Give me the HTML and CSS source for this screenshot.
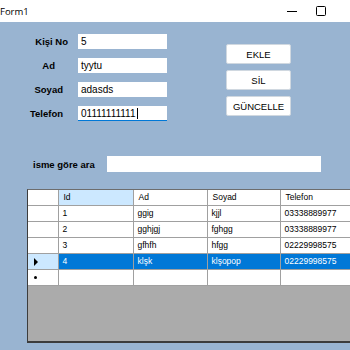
FILE: index.html
```html
<!DOCTYPE html>
<html lang="tr">
<head>
  <meta charset="UTF-8">
  <title>Form1</title>
  <link rel="stylesheet" href="styles.css">
</head>
<body>
  <div class="window">
    <div class="titlebar">
      <span class="title">Form1</span>
      <div class="controls">
        <svg width="10" height="10" viewBox="0 0 10 10"><line x1="0" y1="5.5" x2="10" y2="5.5" stroke="#000" stroke-width="1"/></svg>
        <svg width="10" height="10" viewBox="0 0 10 10"><rect x="0.5" y="0.5" width="9" height="9" rx="1" fill="none" stroke="#000" stroke-width="1"/></svg>
      </div>
    </div>

    <div class="form">
      <div class="top">
        <div class="fields">
          <div class="field"><span class="label">Kişi No</span><div class="textbox">5</div></div>
          <div class="field"><span class="label ad">Ad</span><div class="textbox">tyytu</div></div>
          <div class="field"><span class="label soyad">Soyad</span><div class="textbox">adasds</div></div>
          <div class="field"><span class="label soyad">Telefon</span><div class="textbox focused">01111111111<span class="caret"></span></div></div>
        </div>
        <div class="buttons">
          <button>EKLE</button>
          <button>SİL</button>
          <button>GÜNCELLE</button>
        </div>
      </div>

      <div class="search">
        <span class="label">isme göre ara</span>
        <div class="textbox wide"></div>
      </div>

      <div class="grid">
        <table>
          <colgroup>
            <col style="width: 30px">
            <col style="width: 75px">
            <col style="width: 74px">
            <col style="width: 73px">
            <col style="width: 90px">
          </colgroup>
          <thead>
            <tr>
              <th class="rowhead"></th>
              <th class="current">Id</th>
              <th>Ad</th>
              <th>Soyad</th>
              <th>Telefon</th>
            </tr>
          </thead>
          <tbody>
            <tr><td class="rowhead"></td><td>1</td><td>ggig</td><td>kjjl</td><td>03338889977</td></tr>
            <tr><td class="rowhead"></td><td>2</td><td>gghjgj</td><td>fghgg</td><td>03338889977</td></tr>
            <tr><td class="rowhead"></td><td>3</td><td>gfhfh</td><td>hfgg</td><td>02229998575</td></tr>
            <tr class="selected"><td class="rowhead"><span class="arrow"></span></td><td>4</td><td>klşk</td><td>klşopop</td><td>02229998575</td></tr>
            <tr class="newrow"><td class="rowhead"><span class="dot"></span></td><td></td><td></td><td></td><td></td></tr>
          </tbody>
        </table>
      </div>
    </div>
  </div>
</body>
</html>
```

FILE: styles.css
```css
body {
  margin: 0;
  font-family: "Liberation Sans", Arial, sans-serif;
  font-size: 10px;
  color: #000;
}
.window {
  width: 350px;
  height: 350px;
  overflow: hidden;
  background-color: #99b4d1;
  display: flex;
  flex-direction: column;
}
.titlebar {
  height: 22px;
  background-color: #fff;
  display: flex;
  align-items: center;
  justify-content: space-between;
  flex-shrink: 0;
}
.title {
  font-family: "Open Sans", sans-serif;
  font-size: 9.5px;
  margin-left: 0;
}
.controls {
  display: flex;
  gap: 19px;
  margin-right: 24px;
}
.form {
  flex: 1;
  display: flex;
  flex-direction: column;
  padding-top: 12px;
  min-height: 0;
}
.top {
  display: flex;
}
.fields {
  display: flex;
  flex-direction: column;
  gap: 9px;
}
.field {
  display: flex;
  align-items: center;
  gap: 10px;
}
.label {
  font-weight: bold;
  font-size: 9.5px;
  white-space: nowrap;
}
.field .label {
  width: 68px;
  text-align: right;
  box-sizing: border-box;
}
.field .label.ad {
  padding-right: 13px;
}
.field .label.soyad {
  padding-right: 5px;
}
.textbox {
  width: 89px;
  height: 15px;
  background-color: #fff;
  box-sizing: border-box;
  padding: 0 3px;
  line-height: 15px;
  font-size: 10px;
  display: flex;
  align-items: center;
}
.textbox.focused {
  border-bottom: 1px solid #0078d7;
}
.caret {
  width: 1px;
  height: 11px;
  background-color: #000;
  margin-left: 1px;
}
.buttons {
  display: flex;
  flex-direction: column;
  gap: 6px;
  margin-left: 59px;
  margin-top: 10px;
}
.buttons button {
  width: 65px;
  height: 20px;
  background-color: #fff;
  border: 1px solid #d0d8e0;
  border-radius: 2px;
  font-family: "Liberation Sans", Arial, sans-serif;
  font-size: 9.5px;
  padding: 0;
  color: #000;
}
.search {
  display: flex;
  align-items: center;
  gap: 7px;
  margin-top: 35px;
  padding-left: 33px;
}
.search .label {
  width: 67px;
}
.textbox.wide {
  width: 214px;
  height: 16px;
}
.grid {
  margin-top: 17px;
  margin-left: 27px;
  height: 154px;
  background-color: #ababab;
  border-left: 1px solid #3c3c3c;
  border-top: 1px solid #6d6d6d;
  border-bottom: 2px solid #3c3c3c;
  box-sizing: border-box;
  overflow: hidden;
}
table {
  border-collapse: collapse;
  table-layout: fixed;
  width: 342px;
}
th, td {
  height: 15px;
  padding: 0 0 0 4px;
  border: 1px solid #a0a0a0;
  border-top: none;
  background-color: #fff;
  text-align: left;
  font-weight: normal;
  white-space: nowrap;
  overflow: hidden;
  line-height: 15px;
  font-size: 8.5px;
}
th {
  border-bottom: 1px solid #a0a0a0;
  padding-left: 5px;
}
th.current {
  background-color: #cce8ff;
}
td.rowhead, th.rowhead {
  border-left: none;
  position: relative;
}
tr.selected td {
  background-color: #0078d7;
  color: #fff;
}
tr.selected td.rowhead {
  background-color: #cce8ff;
}
.arrow {
  position: absolute;
  left: 6px;
  top: 4px;
  width: 0;
  height: 0;
  border-top: 4px solid transparent;
  border-bottom: 4px solid transparent;
  border-left: 4px solid #000;
}
.dot {
  position: absolute;
  left: 6px;
  top: 6px;
  width: 3px;
  height: 3px;
  border-radius: 50%;
  background-color: #000;
}
```
